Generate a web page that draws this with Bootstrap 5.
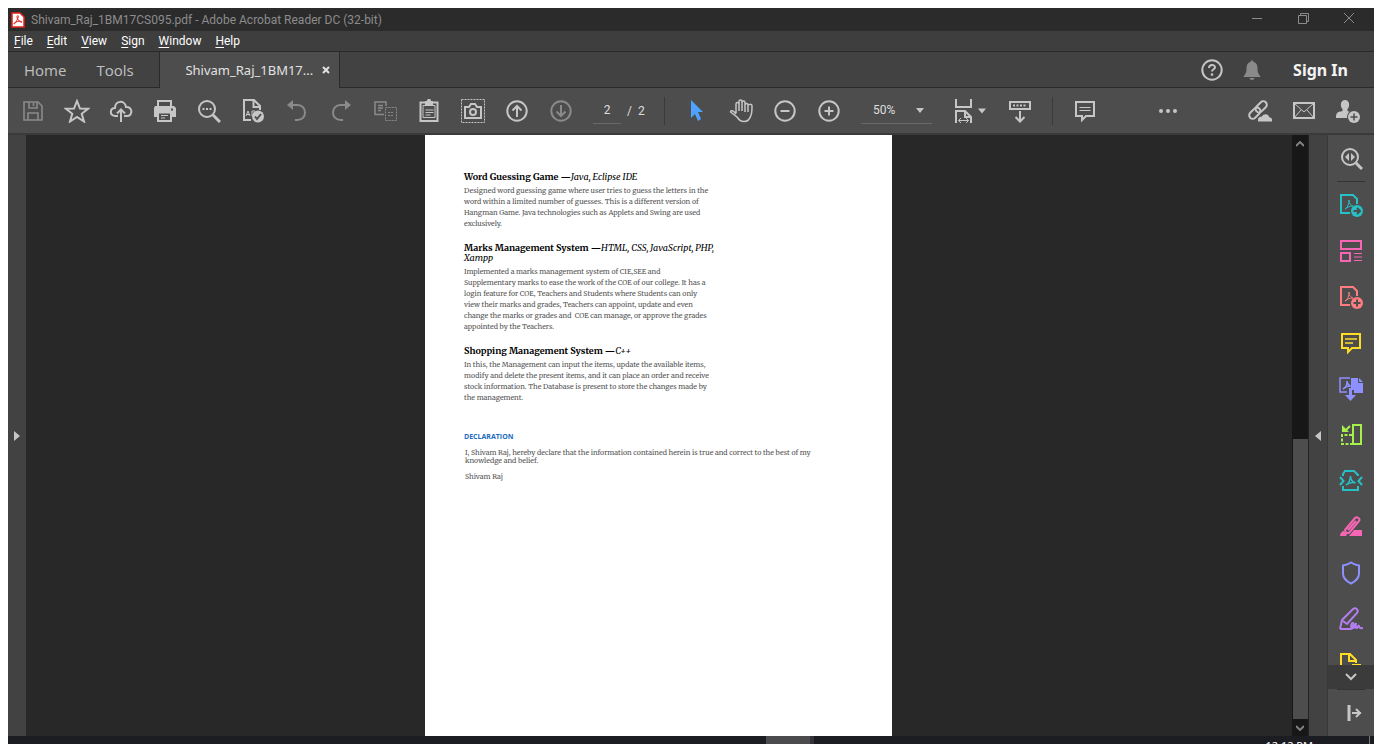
<!DOCTYPE html>
<html lang="en">
<head>
<meta charset="utf-8">
<meta name="viewport" content="width=device-width, initial-scale=1">
<title>Shivam_Raj_1BM17CS095.pdf - Adobe Acrobat Reader DC (32-bit)</title>
<link href="https://cdn.jsdelivr.net/npm/bootstrap@5.3.0/dist/css/bootstrap.min.css" rel="stylesheet">
<style>
:root{--edge:#2a2a2a;--bar:#424242;--tool:#4d4d4d;--icon:#c6c6c6;--dim:#8a8a8a}
body{font-family:"Noto Sans","Open Sans",sans-serif;background:#fff;color:#e6e6e6}
.app{height:100vh;padding:8px 8px 0;line-height:1}
.app>*{flex-shrink:0}
svg{display:block;flex:none;fill:none;stroke:currentColor;stroke-width:2}
.thin{stroke-width:1}
.f{fill:currentColor;stroke:none}
button{background:none;border:0;padding:0;color:inherit;display:flex;align-items:center;justify-content:center}
.titlebar{height:23px;background:#2b2b2b;color:#8c8c8c;font:12px Roboto,sans-serif;padding:0 2px 0 3px}
.titlebar button{width:46px;height:22px;margin-bottom:3px}
.caption{padding-left:6px}
.menubar{height:20px;background:#3e3e3e;font:12px Roboto,sans-serif;color:#fff;gap:14px;padding-left:6px}
.menubar a{color:#fff;text-decoration:none}
.menubar u{text-underline-offset:2px}
.tabbar{height:37px;background:var(--bar);border-top:1px solid var(--edge);color:#c4c4c4}
.tabbar .plain{font:15px "Open Sans",sans-serif;color:#c0c0c0;text-decoration:none;border-bottom:1px solid var(--edge)}
.toolstab{width:77px;padding-left:14px}
.doctab{background:var(--tool);width:181px;padding-left:25px;border:solid var(--edge);border-width:0 1px;font-size:13px;color:#e2e2e2}
.tabrest{border-bottom:1px solid var(--edge);padding-right:26px}
.signin{font-size:16px;font-weight:700;color:#f4f4f4;margin-left:5px}
.tools{height:47px;background:var(--tool);border-bottom:2px solid #3a3a3a;color:var(--icon);padding-left:3px}
.tools button{width:44px;height:44px;flex:none}
.tools .fit{width:50px;padding-right:6px}
.off{color:var(--dim)!important}
.rule{width:1px;height:28px;background:#3a3a3a;flex:none;margin:0 10px}
.pagebox,.zoombox{background:none;border:0;border-bottom:1px solid #6a6a6a;border-radius:0;color:#dedede;font:12px Roboto,sans-serif;height:27px;outline:0}
.pagebox{width:28px;padding:0;text-align:center;margin-left:10px}
.zoombox{width:71px;margin:0 16px 0 10px;padding:0 0 0 12px;appearance:none;background:url("data:image/svg+xml,%3Csvg xmlns='http://www.w3.org/2000/svg' width='8' height='5'%3E%3Cpath d='M0 0h8L4 5z' fill='%23c6c6c6'/%3E%3C/svg%3E") no-repeat right 8px center}
.count{font:12px Roboto,sans-serif;color:#dedede;width:33px;padding-left:6px;white-space:pre}
.stage{background:#282828;min-height:0;flex:1 1 0!important}
.leftpane{width:18px;background:var(--bar);color:var(--icon)}
.viewer{padding-right:1px}
.sheet{width:467px;background:#fff;padding:37px 0 0 39px;color:#555;font:7px/11px Merriweather,"Noto Serif","DejaVu Serif Condensed",serif;white-space:nowrap}
.sheet h2{font:bold 9px/10px Merriweather,"Noto Serif","DejaVu Serif Condensed",serif;color:#000;margin:0 0 3px}
.sheet h2 em{font-weight:400}
.sheet p{margin:0 0 14px}
.sheet h3{font:bold 7px/11px "Open Sans",sans-serif;color:#1a6cc0;margin:28px 0 7px}
.sheet .decl{line-height:8px;margin:0 0 8px 1px}
.scroller{width:17px;background:#171717;color:#808080;border-right:1px solid #222}
.scroller .end{height:17px}
.track{flex:287}
.thumb{width:15px;flex:280;background:var(--tool)}
.gutter{width:19px;background:var(--bar);color:var(--icon);border-right:1px solid #383838}
.side{width:46px;background:var(--tool);color:var(--icon)}
.side button{width:46px;height:46px;flex:none}
.side hr{width:28px;height:1px;margin:0 auto;border:0;background:#343434;opacity:1;flex:none}
.side .more{height:24px;background:#3b3b3b}
.shelf{flex:1 1 0;min-height:0}
.taskbar{height:8px;background:#1c1d22;overflow:hidden;color:#fff;font-size:11px}
.task{width:48px;background:#4b4b4e;border-right:4px solid #333437;margin-left:55.5%}
.clock{padding-top:4px;line-height:11px;margin-right:56px}
.desk{width:5px;border-left:1px solid #777}
</style>
</head>
<body>
<div class="app d-flex flex-column">
  <header class="titlebar d-flex align-items-center">
    <svg width="14" height="16" viewBox="0 0 14 16"><path d="M1 1h8l4 4v10H1z" fill="#fff" stroke="#e2231a" stroke-width="1.500"/><path class="thin" d="M3 12c-1-2 8-4 8-2 0 1.500-5-2-5-5 0-2 2-2 1 1-1 2-2.500 6-4 6z" stroke="#e2231a"/></svg>
    <span class="caption flex-grow-1">Shivam_Raj_1BM17CS095.pdf - Adobe Acrobat Reader DC (32-bit)</span>
    <button aria-label="Minimize"><svg class="thin" width="10" height="10"><path d="M0 5.500h10"/></svg></button>
    <button aria-label="Restore"><svg class="thin" width="11" height="11"><path d="M.5 2.500h8v8h-8zM2.500 2.500v-2h8v8h-2"/></svg></button>
    <button aria-label="Close"><svg class="thin" width="10" height="10"><path d="M0 0l10 10M10 0L0 10"/></svg></button>
  </header>
  <nav class="menubar d-flex align-items-center">
    <a href="#"><u>F</u>ile</a><a href="#"><u>E</u>dit</a><a href="#"><u>V</u>iew</a><a href="#"><u>S</u>ign</a><a href="#"><u>W</u>indow</a><a href="#"><u>H</u>elp</a>
  </nav>
  <nav class="tabbar d-flex">
    <a href="#" class="plain d-flex align-items-center ps-3 pe-3">Home</a>
    <a href="#" class="plain toolstab d-flex align-items-center flex-shrink-0">Tools</a>
    <div class="doctab d-flex align-items-center flex-shrink-0"><span>Shivam_Raj_1BM17...</span><button class="ms-2" aria-label="Close tab"><svg width="10" height="8"><path d="M2 1l6 6M8 1L2 7"/></svg></button></div>
    <div class="tabrest d-flex align-items-center justify-content-end flex-grow-1">
      <button aria-label="Help"><svg width="24" height="24"><circle cx="12" cy="12" r="9.700"/><path d="M9 10c0-4 6-4 6-.7 0 2-3 2-3 4.200"/><circle class="f" cx="12" cy="16.600" r="1.300"/></svg></button>
      <button class="off ms-3 me-4" aria-label="Notifications"><svg width="24" height="24"><path class="f" d="M12 2.500c1 0 1.500.7 1.500 1.500 3 .8 4 3 4 6 0 4 .7 6 3 8.500v.5h-17v-.5c2.300-2.500 3-4.500 3-8.500 0-3 1-5.200 4-6 0-.8.500-1.500 1.500-1.500zM9.500 20h5c-.5 2.500-4.500 2.500-5 0z"/></svg></button>
      <button class="signin">Sign In</button>
    </div>
  </nav>
  <div class="tools d-flex align-items-center" role="toolbar">
    <button class="off" aria-label="Save"><svg width="24" height="24"><path d="M3 3h14l4 4v14H3zM8 3v6h8V3M7 21v-7h10v7M12.500 4v3" style="stroke-width:1.600"/></svg></button>
    <button aria-label="Star"><svg width="26" height="24"><path d="M13 2l3 7.500 8 .3-6.300 5L20 22.500 13 18l-7 4.500 2.300-7.700-6.300-5 8-.3z"/></svg></button>
    <button aria-label="Upload"><svg width="24" height="24"><path d="M9 17H6c-6-1-5-8 0-8C6 1 16 1 17 8c7-.5 7 9 1 9h-3M12 23V11M8 14.500l4-4 4 4"/></svg></button>
    <button aria-label="Print"><svg width="24" height="24"><path d="M5 8V2h13v6"/><path class="f" d="M2 7h19l2 2v9H1V9z"/><path d="M5 13.500h13V22H5z" fill="#4d4d4d"/><path d="M8 16.500h7M8 19h4" class="thin"/><path d="M18 10.500h2" stroke="#4d4d4d"/></svg></button>
    <button aria-label="Find"><svg width="24" height="24"><circle cx="10" cy="10" r="8"/><path d="M16 16l7 7" style="stroke-width:3"/><path d="M5.500 10h9" stroke-dasharray="2 1.500"/></svg></button>
    <button aria-label="Spell check"><svg width="24" height="24"><path d="M10 21H3V1h10l6 6v4M12.500 1v7H19"/><path class="thin" d="M5 17l2-5 2 5M6 15.500h3M11 17v-5h3"/><circle class="f" cx="17" cy="17.500" r="6"/><path d="M14 17.500l2 2.500 4-5" stroke="#4d4d4d"/></svg></button>
    <button class="off" aria-label="Undo"><svg width="24" height="24"><path d="M4 6h8.500c10 0 10 15 0 15H10"/><path class="f" d="M2 6l6-5v10z"/></svg></button>
    <button class="off" aria-label="Redo"><svg width="24" height="24"><path d="M20 6h-8.500c-10 0-10 15 0 15H14"/><path class="f" d="M22 6l-6-5v10z"/></svg></button>
    <button class="off" aria-label="Compare"><svg width="24" height="24"><path d="M11 15.500H2V3h11v4M5 6.500h5M5 9h5M5 11.500h3" style="stroke-width:1.500"/><path class="thin" d="M12.500 8.500h11v13h-11zM15 13.500h5M15 16.500h5" stroke-dasharray="2 1"/></svg></button>
    <button aria-label="Clipboard"><svg width="24" height="24"><path d="M8 3.500H3.500V22h17V3.500H16"/><path class="f" d="M8 2h2c0-3 4-3 4 0h2v4H8z"/><path class="thin" d="M6 6.500h12v12H6zM8.500 11h8M8.500 13.500h8M8.500 16h5"/></svg></button>
    <button aria-label="Snapshot"><svg width="26" height="24"><path class="thin" d="M1.500.500h23v23h-23z" stroke-dasharray="2 1"/><path d="M5 8h4l2-3h4l2 3h4v11H5z"/><circle cx="13" cy="13" r="3"/></svg></button>
    <button aria-label="Previous page"><svg width="24" height="24"><circle cx="12" cy="12" r="9.700"/><path d="M12 18V7M7.500 11.500L12 7l4.500 4.500"/></svg></button>
    <button class="off" aria-label="Next page"><svg width="24" height="24"><circle cx="12" cy="12" r="9.700"/><path d="M12 6v11M7.500 12.500L12 17l4.500-4.500"/></svg></button>
    <input class="pagebox" value="2" aria-label="Page number"><span class="count">/  2</span>
    <span class="rule"></span>
    <button style="color:#4da3ff" aria-label="Select"><svg width="24" height="24"><path class="f" d="M6 1l12 12h-5l3 7-3 2-3-7-4 4z"/></svg></button>
    <button aria-label="Hand"><svg width="26" height="24"><path d="M8 14V5c0-2 3-2 3 0v7V2.500c0-2 3-2 3 0V12 3.500c0-2 3-2 3 0V13 6c0-2 3-2 3 0 0 0 4-2 4 1 0 6 0 7-1 9-1 4-4 6.500-7 6.500s-5-1.500-7-4.500L2.500 13c0-2 3-2 5.500 2M20 6v7" style="stroke-width:1.500"/></svg></button>
    <button aria-label="Zoom out"><svg width="24" height="24"><circle cx="12" cy="12" r="9.700"/><path d="M7.500 12h9"/></svg></button>
    <button aria-label="Zoom in"><svg width="24" height="24"><circle cx="12" cy="12" r="9.700"/><path d="M7.500 12h9M12 7.500v9"/></svg></button>
    <select class="zoombox" aria-label="Zoom"><option>50%</option></select>
    <button class="fit" aria-label="Fit width"><svg width="34" height="26"><path d="M3 1v8h15V1M3 25V13h9l6 6v6M12 13v6h6"/><path class="thin" d="M5.500 22.500h10M8 20l-2.500 2.500L8 25M13 20l2.500 2.500L13 25"/><path class="f" d="M25 10.500h8l-4 5z"/></svg></button>
    <button aria-label="Read mode"><svg width="24" height="24"><path d="M2 3h20v7H2z"/><path d="M5 6.500h14" stroke-dasharray="2 1.500"/><path d="M12 12v10M7.500 18l4.500 4.500 4.500-4.500"/></svg></button>
    <span class="rule"></span>
    <button aria-label="Comment"><svg width="24" height="24"><path d="M3 3h18v14h-8l-4 4v-4H3z"/><path class="thin" d="M6.500 8.500h11M6.500 11.500h11"/></svg></button>
    <button class="ms-auto" aria-label="More tools"><svg width="24" height="24"><g class="f"><circle cx="5" cy="12" r="2"/><circle cx="12" cy="12" r="2"/><circle cx="19" cy="12" r="2"/></g></svg></button>
    <span class="mx-4"></span>
    <button aria-label="Share link"><svg width="24" height="24"><g transform="rotate(-45 10 11)"><rect x="-1" y="7.500" width="13" height="7" rx="3.500"/><rect x="8" y="7.500" width="13" height="7" rx="3.500"/></g><path class="f" d="M10 22.500v-2c0-2 2-3 4-3 1-3 7-3 7 .5 2 .5 3 1.500 3 3v1.500z"/></svg></button>
    <button aria-label="Email"><svg width="24" height="24"><path d="M2 4h20v15H2z"/><path class="thin" d="M2 4l10 9 10-9M2 19l7-8M22 19l-7-8"/></svg></button>
    <button class="me-1" aria-label="Share with people"><svg width="26" height="24"><path class="f" d="M10 1c5 0 5 7 2.500 9v2c3 1 5 2 5 7H1c0-5 1-6 6.500-7v-2C5 8 5 1 10 1z"/><circle class="f" cx="19" cy="18" r="7" style="fill:#4d4d4d"/><circle class="f" cx="19" cy="18" r="6"/><path d="M15.500 18h7M19 14.500v7" stroke="#4d4d4d" style="stroke-width:1.500"/></svg></button>
  </div>
  <div class="stage d-flex">
    <button class="leftpane" aria-label="Open navigation pane"><svg width="6" height="12"><path class="f" d="M0 1l6 5-6 5z"/></svg></button>
    <main class="viewer flex-grow-1 d-flex justify-content-center">
      <article class="sheet">
        <h2>Word Guessing Game —<em>Java, Eclipse IDE</em></h2>
        <p>Designed word guessing game where user tries to guess the letters in the<br>word within a limited number of guesses. This is a different version of<br>Hangman Game. Java technologies such as Applets and Swing are used<br>exclusively.</p>
        <h2>Marks Management System —<em>HTML, CSS, JavaScript, PHP,<br>Xampp</em></h2>
        <p>Implemented a marks management system of CIE,SEE and<br>Supplementary marks to ease the work of the COE of our college. It has a<br>login feature for COE, Teachers and Students where Students can only<br>view their marks and grades, Teachers can appoint, update and even<br>change the marks or grades and&nbsp; COE can manage, or approve the grades<br>appointed by the Teachers.</p>
        <h2>Shopping Management System —<em>C++</em></h2>
        <p>In this, the Management can input the items, update the available items,<br>modify and delete the present items, and it can place an order and receive<br>stock information. The Database is present to store the changes made by<br>the management.</p>
        <h3>DECLARATION</h3>
        <p class="decl">I, Shivam Raj, hereby declare that the information contained herein is true and correct to the best of my<br>knowledge and belief.</p>
        <p class="decl">Shivam Raj</p>
      </article>
    </main>
    <div class="scroller d-flex flex-column align-items-center">
      <button class="end" aria-label="Scroll up"><svg width="8" height="6"><path d="M0 5l4-4 4 4"/></svg></button>
      <div class="track"></div>
      <div class="thumb"></div>
      <button class="end" aria-label="Scroll down"><svg width="8" height="6"><path d="M0 1l4 4 4-4"/></svg></button>
    </div>
    <button class="gutter" aria-label="Collapse tools pane"><svg width="6" height="12"><path class="f" d="M6 1L0 6l6 5z"/></svg></button>
    <aside class="side d-flex flex-column">
      <button aria-label="Search tools"><svg width="24" height="24"><circle cx="11" cy="11" r="8"/><path d="M17 17l6 6" style="stroke-width:3"/><path class="f" d="M10 7v8l-4-4zM12 7v8l4-4z"/></svg></button>
      <hr>
      <div class="shelf overflow-hidden d-flex flex-column">
        <button style="color:#26c0c7" aria-label="Export PDF"><svg width="24" height="24"><path d="M11 20H2V2h12l4 4v5"/><path class="thin" d="M6 16c3-1 4-6 4-9 0 4 2 5 4 6-3 0-6 1-8 3z"/><circle class="f" cx="18" cy="18" r="6"/><path d="M14.500 18h6M18 15l3 3-3 3" stroke="#4d4d4d"/></svg></button>
        <button style="color:#f766b4" aria-label="Organize Pages"><svg width="24" height="24"><path d="M2 2h20v8H2zM2 14h9v8H2z"/><path class="thin" d="M15 14.500h8M15 18h8M15 21.500h8"/></svg></button>
        <button style="color:#ff7c80" aria-label="Create PDF"><svg width="24" height="24"><path d="M11 20H2V2h12l4 4v5"/><path class="thin" d="M6 16c3-1 4-6 4-9 0 4 2 5 4 6-3 0-6 1-8 3z"/><circle class="f" cx="18" cy="18" r="6"/><path d="M14.500 18h7M18 14.500v7" stroke="#4d4d4d"/></svg></button>
        <button style="color:#ffdd24" aria-label="Comment tool"><svg width="24" height="24"><path d="M3 3h18v14h-8l-4 4v-4H3z"/><path d="M6 8h12M6 12h8" style="stroke-width:1.500"/></svg></button>
        <button style="color:#8f90ff" aria-label="Combine Files"><svg width="24" height="24"><path d="M8 15H1V1h10M4 12c3-1 4-5 4-8 0 3 2 4 3 5-3 0-5 1-7 3z" style="stroke-width:1.500"/><path class="f" d="M12 1h7v5h5v10h-9v-3h-3zM20 1l4 4h-4z"/><path d="M11.500 11v9" style="stroke-width:3"/><path class="f" d="M6 18h11l-5.500 6z"/></svg></button>
        <button style="color:#a5f04a" aria-label="Compare Files"><svg width="24" height="24"><path d="M14 2h8v19h-8z"/><path d="M13 12H3v9h10" stroke-dasharray="3 1.500"/><path d="M11 3L6 8"/><path class="f" d="M3 2v7h7z"/></svg></button>
        <button style="color:#26c0c7" aria-label="Compress PDF"><svg width="24" height="24"><path d="M4 7V5l2-3h9l4 4v1M4 17v4h15v-4M1 8l3.500 4L1 16M23 8l-3.500 4 3.500 4"/><path d="M7 16c3-1 4.500-6 4.500-9 0 4 2 6 5 7-3-1-6.500 0-9.500 2z" style="stroke-width:1.500"/></svg></button>
        <button style="color:#f766b4" aria-label="Redact"><svg width="24" height="24"><path d="M6 15L16 3c2-2 6 1 4 3L10 18H7zM9 15l8-9"/><path class="f" d="M1 21c0-3 2-5 4-5l3 4-1 1zM10 21l5-6h8v6z"/></svg></button>
        <button style="color:#8f90ff" aria-label="Protect"><svg width="24" height="24"><path d="M12 1.500c3 2 5 2.500 8 3v8c0 5-4 8-8 10-4-2-8-5-8-10v-8c3-.5 5-1 8-3z"/></svg></button>
        <button style="color:#b37ff0" aria-label="Fill and Sign"><svg width="24" height="24"><path d="M1 22l2-9L14 2c3-2 6 1 4 4L8 17l-4-3M1 22h11c3-2 3-6 2-6-2 0-3 6 0 5 2 0 3-5 3-5s-1 6 1 5l2-3s-1 4 4 3"/></svg></button>
        <button style="color:#ffdd24" aria-label="More PDF tools"><svg width="24" height="24"><path d="M8 21H2V1h9l6 6v3M10 1v7h7"/><path class="f" d="M13 11h9v3h-9z"/></svg></button>
      </div>
      <button class="more" aria-label="Scroll tools"><svg width="12" height="8"><path d="M1 1l5 5 5-5"/></svg></button>
      <hr>
      <button aria-label="Hide tools pane"><svg width="24" height="24"><path d="M10 4v16" style="stroke-width:3"/><path d="M13 12h9M17 8l4 4-4 4"/></svg></button>
    </aside>
  </div>
  <footer class="taskbar d-flex">
    <div class="task"></div>
    <div class="clock ms-auto">12:12 PM</div><div class="desk"></div>
  </footer>
</div>
<script src="https://cdn.jsdelivr.net/npm/bootstrap@5.3.0/dist/js/bootstrap.bundle.min.js"></script>
</body>
</html>
